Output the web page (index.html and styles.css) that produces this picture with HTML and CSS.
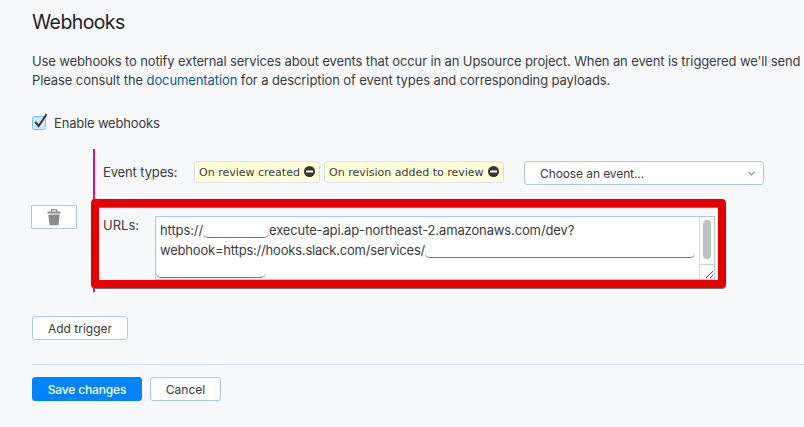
FILE: index.html
```html
<!DOCTYPE html>
<html lang="en">
<head>
<meta charset="utf-8">
<title>Webhooks</title>
<link rel="stylesheet" href="styles.css">
</head>
<body>
<main class="page">
  <h1 class="title"><span>Webhooks</span></h1>
  <p class="intro"><span class="l1">Use webhooks to notify external services about events that occur in an Upsource project. When an event is triggered we'll send</span><br><span class="l2">Please consult the <a class="link">documentation</a> for a description of event types and corresponding payloads.</span></p>
  <label class="enable">
    <svg class="check" width="17" height="18" viewBox="0 0 17 18"><rect x=".5" y="3.5" width="13" height="13" rx="2" fill="#cce7ff" stroke="#7fbef5"/><path d="M3.2 8.8 6.6 13 14.6 1.2" fill="none" stroke="#33363a" stroke-width="2"/></svg>
    <span class="enable-text">Enable webhooks</span>
  </label>
  <section class="trigger">
    <button class="btn trash" aria-label="Delete"><svg width="14" height="17" viewBox="0 0 14 17"><path d="M4.3 3V1.2Q4.3.7 4.8.7H9.2Q9.7.7 9.7 1.2V3" fill="none" stroke="#8b8b8b" stroke-width="1.2"/><path d="M.5 2.6H13.5V4.6H.5ZM1.3 5.6H12.7L11.6 15.2Q11.5 16.2 10.5 16.2H3.5Q2.5 16.2 2.4 15.2Z" fill="#8b8b8b"/></svg></button>
    <div class="details">
      <div class="row events">
        <span class="name"><span class="t-event">Event types:</span></span>
        <span class="tag tag-a"><span>On review created</span><svg width="11" height="11" viewBox="0 0 11 11"><circle cx="5.5" cy="5.5" r="5.5" fill="#333"/><path d="M2 5.5H9" stroke="#ffffd9" stroke-width="2"/></svg></span>
        <span class="tag tag-b"><span>On revision added to review</span><svg width="11" height="11" viewBox="0 0 11 11"><circle cx="5.5" cy="5.5" r="5.5" fill="#333"/><path d="M2 5.5H9" stroke="#ffffd9" stroke-width="2"/></svg></span>
        <span class="select"><span>Choose an event...</span><svg width="7" height="5" viewBox="0 0 7 5"><path d="M.5.8 3.5 3.8 6.5.8" fill="none" stroke="#8a8a8a" stroke-width="1.2"/></svg></span>
      </div>
      <div class="row urls">
        <span class="name"><span class="t-urls">URLs:</span></span>
        <div class="field">
          <div class="value">
            <div class="line"><span class="u1">https://</span><i class="blank blank-a"></i><span class="u2">execute-api.ap-northeast-2.amazonaws.com/dev?</span></div>
            <div class="line"><span class="u3">webhook=https://hooks.slack.com/services/</span><i class="blank blank-b"></i></div>
            <div class="line last"><i class="blank blank-c"></i></div>
          </div>
          <div class="scroll"><div class="track"><div class="thumb"></div></div><svg class="grip" width="14" height="14" viewBox="0 0 14 14"><path d="M6 13 13 6M10 13 13 10" stroke="#555" fill="none"/></svg></div>
        </div>
      </div>
      <div class="highlight"></div>
    </div>
  </section>
  <button class="btn add"><span>Add trigger</span></button>
  <footer class="actions">
    <button class="btn save"><span>Save changes</span></button>
    <button class="btn cancel"><span>Cancel</span></button>
  </footer>
</main>
</body>
</html>
```
FILE: styles.css
```css
* { box-sizing: border-box; }
body { margin: 0; background: #f7f8fa; color: #3a3c40; font: 13px/19px Inter, "Liberation Sans", sans-serif; overflow: hidden; }
.page { padding: 8px 0 0 32px; height: 427px; white-space: nowrap; }
.title { margin: 0; font-size: 19.5px; line-height: 28px; font-weight: 400; letter-spacing: -.6px; color: #1f2226; }
.intro { margin: 16px 0 0; }
.l1 { letter-spacing: -.125px; }
.l2 { letter-spacing: -.1px; }
.link { color: #0f5b99; }
.enable { display: flex; align-items: center; height: 18px; margin-top: 23px; }
.check { flex: none; }
.enable-text { margin-left: 5px; padding-top: 3px; letter-spacing: -.18px; }
.trigger { display: flex; align-items: flex-start; margin-top: 18px; height: 143px; }
.btn { display: flex; align-items: center; justify-content: center; height: 24px; padding: 0; border: 1px solid #adc9e2; border-radius: 3px; background: #fff; color: #33363a; font: inherit; font-size: 12px; white-space: nowrap; }
.trash { width: 46px; margin: 56px 16px 0 -1px; border-radius: 1px; }
.details { position: relative; flex: 1; height: 143px; border-left: 2px solid #f5087f; padding: 12px 0 0 8px; }
.row { display: flex; align-items: flex-start; }
.name { flex: none; }
.events .name { width: 91px; padding-top: 2px; letter-spacing: -.13px; }
.tag { display: flex; align-items: center; justify-content: space-between; height: 22px; padding: 0 4px; border: 1px solid #d8e0e8; border-radius: 3px; background: #ffffd9; font: 11px/20px "DejaVu Sans", sans-serif; margin-right: 4px; }
.tag span { padding-top: 1px; }
.tag svg { margin-bottom: 1px; }
.tag-a { width: 126px; }
.tag-b { width: 180px; }
.select { display: flex; align-items: center; justify-content: space-between; width: 240px; height: 24px; margin-left: 16px; padding: 0 8px 0 15px; border: 1px solid #adc9e2; border-radius: 3px; background: #fff; font-size: 12px; letter-spacing: -.1px; }
.urls { margin-top: 31px; }
.urls .name { width: 52px; }
.field { display: flex; width: 560px; height: 64px; border: 1px solid #adc9e2; background: #fff; }
.value { flex: 1; min-width: 0; padding: 3px 0 0 4px; }
.line { display: flex; height: 20px; line-height: 20px; }
.last { margin-left: -4px; }
.u1 { letter-spacing: -.1px; }
.u2 { letter-spacing: -.13px; }
.u3 { letter-spacing: -.2px; }
.blank { flex: none; height: 10px; margin-top: 8px; border-bottom: 1px solid #777; border-radius: 0 0 5px 5px; }
.blank-a { width: 66px; }
.blank-b { width: 270px; }
.blank-c { width: 110px; }
.scroll { flex: none; width: 15px; border-left: 1px solid #d9d9d9; background: #fafafa; }
.track { height: 48px; padding: 3px 0 0 3px; border-bottom: 1px solid #d2d2d2; }
.thumb { width: 8px; height: 39px; border-radius: 4px; background: #c1c1c1; }
.grip { display: block; }
.highlight { position: absolute; left: -4px; top: 50px; width: 635px; height: 89px; border: 8px solid #e60000; border-radius: 4px; box-shadow: 0 1px 0 #777, inset 0 1px 0 #777; }
.add { width: 96px; margin-top: 24px; }
.actions { display: flex; gap: 8px; margin-top: 24px; padding-top: 12px; border-top: 1px solid #d4dee7; }
.save { width: 110px; background: #0083ff; border-color: #0083ff; color: #fff; font-weight: 500; letter-spacing: -.15px; }
.cancel { width: 71px; }
```
